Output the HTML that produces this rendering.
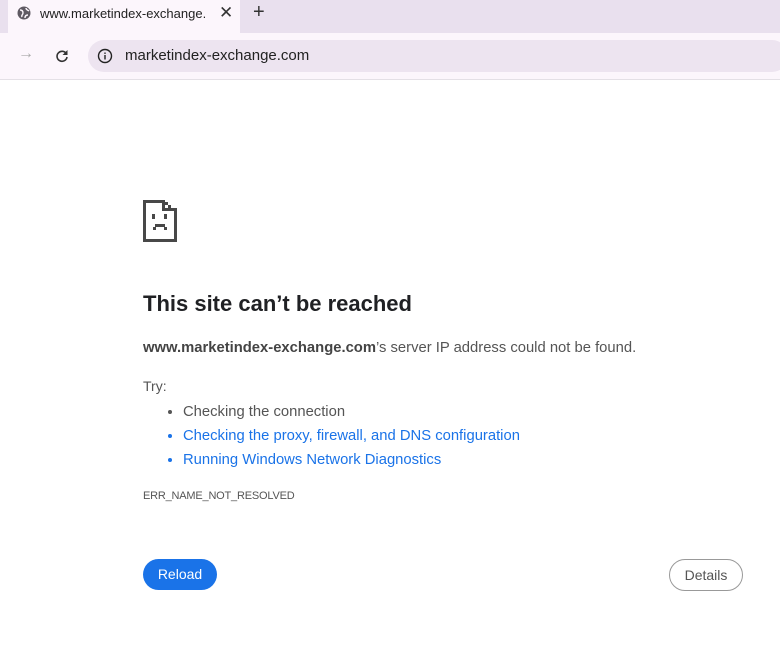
<!DOCTYPE html><html><head><style>
body{margin:0;width:780px;height:664px;background:#fff;font-family:"Liberation Sans",sans-serif;position:relative;overflow:hidden}
.a{position:absolute}
</style></head><body>
<div class="a" style="left:0;top:0;width:780px;height:33px;background:#e9e0ee"></div>
<div class="a" style="left:8px;top:0;width:232px;height:33px;background:#fcf6fc"></div>
<div class="a" style="left:0;top:33px;width:780px;height:46px;background:#fcf6fc;border-bottom:1px solid #e4e0e6"></div>
<svg class="a" style="left:17px;top:6px" width="14" height="14" viewBox="0 0 14 14"><circle cx="7" cy="7" r="6.5" fill="#5f5a63"/><path d="M3 4c2 0 3 1 3 3s-2 2-1 4M9 2c0 2 2 2 3 3M8 12c0-2 1-3 3-3" stroke="#fcf6fc" stroke-width="1.4" fill="none"/></svg>
<div class="a" style="left:40px;top:6px;font-size:13px;color:#222;width:165px;white-space:nowrap;overflow:hidden">www.marketindex-exchange.com</div>
<div class="a" style="left:219px;top:3px;font-size:17px;color:#333">✕</div>
<div class="a" style="left:253px;top:1px;font-size:20px;color:#333">+</div>
<div class="a" style="left:18px;top:45px;font-size:16px;color:#aaa">→</div>
<svg class="a" style="left:55px;top:49px" width="14" height="14" viewBox="0 0 14 14"><path d="M11.5 5A5 5 0 1 0 12 8" stroke="#333" stroke-width="1.6" fill="none"/><path d="M12.5 1v5h-5z" fill="#333"/></svg>
<div class="a" style="left:88px;top:40px;width:700px;height:32px;border-radius:16px;background:#ede4f0"></div>
<svg class="a" style="left:97px;top:48px" width="16" height="16" viewBox="0 0 16 16"><circle cx="8" cy="8" r="6.5" stroke="#222" stroke-width="1.4" fill="none"/><rect x="7.3" y="7" width="1.4" height="4.5" fill="#222"/><rect x="7.3" y="4.5" width="1.4" height="1.4" fill="#222"/></svg>
<div class="a" style="left:125px;top:47px;font-size:15px;color:#222">marketindex-exchange.com</div>
<svg class="a" style="left:143px;top:200px" width="34" height="42" viewBox="0 0 34 42" fill="#484848"><rect x="0" y="0" width="22" height="3"/><rect x="0" y="0" width="3" height="42"/><rect x="0" y="39" width="34" height="3"/><rect x="31" y="10" width="3" height="32"/><rect x="19" y="0" width="3" height="10"/><rect x="19" y="8" width="15" height="3"/><rect x="22" y="2" width="3" height="3"/><rect x="25" y="5" width="3" height="3"/><rect x="28" y="8" width="3" height="3"/><rect x="9" y="14" width="3" height="5"/><rect x="21" y="14" width="3" height="5"/><rect x="10" y="27" width="3" height="3"/><rect x="12" y="24" width="10" height="3"/><rect x="21" y="27" width="3" height="3"/></svg>
<div class="a" style="left:143px;top:291px;font-size:22px;font-weight:bold;color:#202124">This site can’t be reached</div>
<div class="a" style="left:143px;top:340px;font-size:14.8px;color:#555"><b style="color:#444">www.marketindex-exchange.com</b>’s server IP address could not be found.</div>
<div class="a" style="left:143px;top:378px;font-size:14px;color:#555">Try:</div>
<ul class="a" style="left:143px;top:400px;margin:0;padding-left:40px;font-size:14.8px;line-height:24px;color:#555">
<li>Checking the connection</li><li style="color:#1a73e8">Checking the proxy, firewall, and DNS configuration</li><li style="color:#1a73e8">Running Windows Network Diagnostics</li></ul>
<div class="a" style="left:143px;top:490px;font-size:11px;color:#555;letter-spacing:-0.2px">ERR_NAME_NOT_RESOLVED</div>
<div class="a" style="left:143px;top:559px;width:74px;height:31px;border-radius:16px;background:#1a73e8;color:#fff;font-size:14px;line-height:31px;text-align:center">Reload</div>
<div class="a" style="left:669px;top:559px;width:72px;height:30px;border-radius:16px;border:1px solid #999;color:#555;font-size:14px;line-height:30px;text-align:center">Details</div>
</body></html>
